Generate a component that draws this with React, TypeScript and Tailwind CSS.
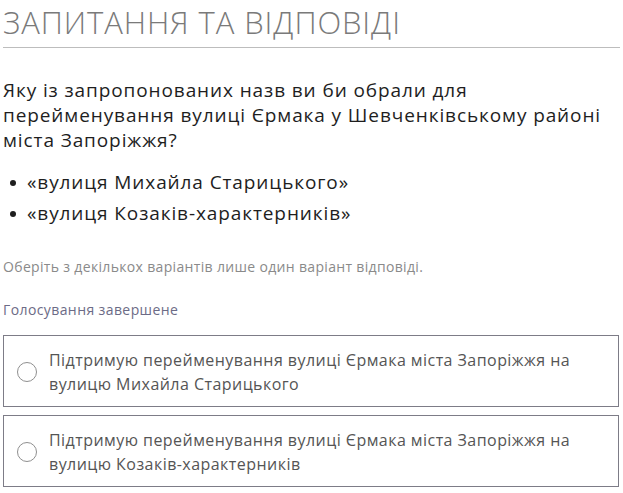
import React from "react";

const options = [
  "Підтримую перейменування вулиці Єрмака міста Запоріжжя на вулицю Михайла Старицького",
  "Підтримую перейменування вулиці Єрмака міста Запоріжжя на вулицю Козаків-характерників",
];

const names = ["«вулиця Михайла Старицького»", "«вулиця Козаків-характерників»"];

const Option = ({ label }: { label: string }) => (
  <label className="flex items-center gap-[12px] border border-[#7d7c87] pl-[13px] pr-6 pt-[12px] pb-[10px] cursor-pointer">
    <span className="shrink-0 w-[20px] h-[20px] rounded-full border border-[#8f8f8f] bg-white" />
    <span className="text-[16px] leading-[24px] tracking-[0.45px] text-[#555555]">{label}</span>
  </label>
);

const App = () => (
  <div className="bg-white min-h-screen px-[3px] pt-[2px] font-['Open_Sans',sans-serif]">
    <h2 className="text-[31px] leading-[40px] font-light text-[#7a7a7a] tracking-[0.9px] pb-[5px] border-b border-[#bdbdbd]">
      ЗАПИТАННЯ ТА ВІДПОВІДІ
    </h2>

    <p className="mt-[30px] text-[19px] leading-[25px] tracking-[0.9px] text-[#1e1e1e]">
      Яку із запропонованих назв ви би обрали для перейменування вулиці Єрмака у Шевченківському районі міста Запоріжжя?
    </p>

    <ul className="mt-[17px] flex flex-col gap-[6px]">
      {names.map((name) => (
        <li key={name} className="flex items-center text-[19px] leading-[25px] tracking-[0.9px] text-[#1e1e1e]">
          <span className="w-[6px] h-[6px] rounded-full bg-[#1e1e1e] ml-[7px] mr-[11px]" />
          {name}
        </li>
      ))}
    </ul>

    <p className="mt-[32px] text-[14px] leading-[18px] tracking-[0.33px] text-[#8a8a8a]">
      Оберіть з декількох варіантів лише один варіант відповіді.
    </p>

    <p className="mt-[25px] text-[14px] leading-[18px] tracking-[0.4px] text-[#6c6b86]">Голосування завершене</p>

    <div className="mt-[16px] mr-[1px] flex flex-col gap-[8px]">
      {options.map((o) => (
        <Option key={o} label={o} />
      ))}
    </div>
  </div>
);

export default App;
